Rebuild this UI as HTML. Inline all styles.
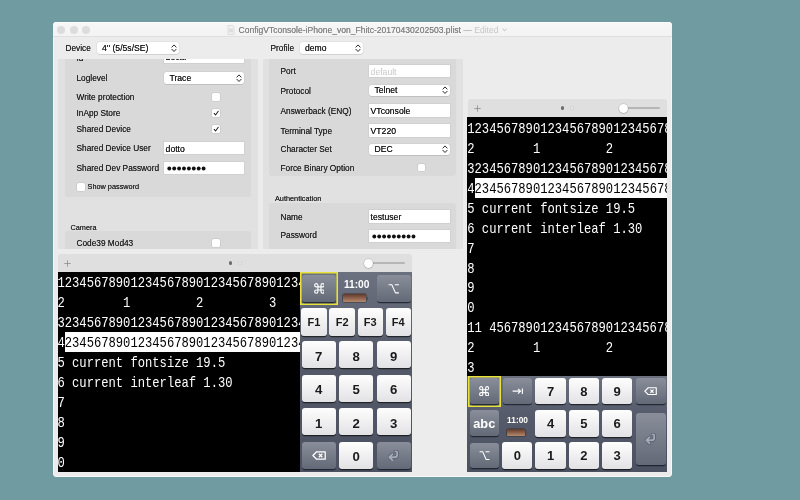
<!DOCTYPE html>
<html>
<head>
<meta charset="utf-8">
<style>
*{box-sizing:border-box;margin:0;padding:0}
html,body{width:800px;height:500px;overflow:hidden}
body{background:#6f9ba1;font-family:"Liberation Sans",sans-serif;position:relative;color:#222}
div,span,svg{position:absolute}
#win{left:53px;top:22.4px;width:619.3px;height:455px;background:#ececec;border-radius:4px;box-shadow:inset 0 0 0 0.8px rgba(255,255,255,.75)}
#tb{left:53px;top:22.4px;width:619.3px;height:13.6px;background:linear-gradient(#f7f7f7,#f3f3f3);border-radius:4px 4px 0 0;box-shadow:inset 0 0.8px 0 rgba(255,255,255,.9),0 1px 0 #e0e0e0}
.tl{top:25.7px;width:8px;height:8px;margin-left:-0.25px;border-radius:50%;background:#dcdcdc}
#title{top:24.8px;left:238.6px;font-size:8.55px;line-height:11px;color:#868686;text-shadow:0 0 0.3px #868686;white-space:nowrap}
#title span{position:static;color:#c6c6c6;text-shadow:none}
.lbl{font-size:8.3px;line-height:12px;white-space:nowrap;color:#262626;text-shadow:0 0 0.35px rgba(38,38,38,.9)}
.sm{font-size:7.3px;margin-top:0.5px}
.sel,.fld{background:#fff;font-size:8.65px;line-height:12px;white-space:nowrap;color:#1e1e1e;text-shadow:0 0 0.35px rgba(30,30,30,.95)}
.sel{border-radius:2.5px;box-shadow:0 0 0 0.5px rgba(0,0,0,.07),0 0.6px 0.6px rgba(0,0,0,.16)}
.fld{box-shadow:0 0 0 0.5px rgba(0,0,0,.08)}
.sv{background:#e1e1e1;overflow:hidden}
.box{background:#d9d9d9;border-radius:3px}
.cb{width:7.5px;height:7.5px;background:#fff;border-radius:1.5px;box-shadow:0 0 0 0.5px rgba(0,0,0,.1)}
.hdr{background:#dfdfdf;border-radius:3px 3px 0 0}
.term{background:#000;overflow:hidden}
.row{left:0;font-family:"Liberation Mono",monospace;font-size:12.17px;line-height:20px;height:20px;color:#fff;white-space:pre;transform-origin:0 50%;transform:scaleY(1.13)}
.row.inv{color:#000}
.hl{background:#fff}
.kb{background:linear-gradient(#6b717f,#555b6a 40%,#4b5160);overflow:hidden}
.k{border-radius:3px;text-align:center;font-weight:bold;color:#1a1a1a;background:linear-gradient(#fefefe,#e2e2e5);box-shadow:0 1.2px 0.5px rgba(0,0,0,.6)}
.k.d{background:linear-gradient(#898e9a,#646977);color:#fff;box-shadow:0 1.3px 0.5px rgba(20,24,36,.75)}
.k span{left:0;width:100%;text-align:center}
</style>
</head>
<body>
<div id="root" style="left:0;top:0;width:800px;height:500px;will-change:transform">
<div id="win"></div>
<div id="tb"></div>
<div class="tl" style="left:57.5px"></div>
<div class="tl" style="left:70px"></div>
<div class="tl" style="left:82.5px"></div>
<svg style="left:227.2px;top:24.8px" width="8" height="10" viewBox="0 0 8 10"><path d="M1 0.5h4.5l1.5 1.5v7.5h-6z" fill="#f2f2f2" stroke="#cfcfcf" stroke-width="0.6"/><rect x="2" y="3.5" width="4" height="4" fill="#dedede"/></svg>
<div id="title">ConfigVTconsole-iPhone_von_Fhitc-20170430202503.plist <span style="color:#a4a4a4">—</span> <span>Edited</span></div>
<svg style="left:501.5px;top:28px" width="5" height="4" viewBox="0 0 5 4"><path d="M0.6 0.8L2.5 2.7L4.4 0.8" fill="none" stroke="#b2b2b2" stroke-width="0.95"/></svg>

<div class="lbl " style="left:65.5px;top:42.4px">Device</div>
<div class="sel" style="left:97px;top:42px;width:82px;height:12px"><span style="left:5px;top:0.1px">4'' (5/5s/SE)</span><svg style="right:1.6px;top:1.7999999999999998px" width="6" height="8.4" viewBox="0 0 6 8.4"><path d="M0.9 3.1 L3 0.9 L5.1 3.1 M0.9 5.3 L3 7.5 L5.1 5.3" fill="none" stroke="#2a2a2a" stroke-width="1" stroke-linecap="round" stroke-linejoin="round"/></svg></div>
<div class="lbl " style="left:270.5px;top:42.4px">Profile</div>
<div class="sel" style="left:300px;top:42px;width:63px;height:12px"><span style="left:5px;top:0.1px">demo</span><svg style="right:1.6px;top:1.7999999999999998px" width="6" height="8.4" viewBox="0 0 6 8.4"><path d="M0.9 3.1 L3 0.9 L5.1 3.1 M0.9 5.3 L3 7.5 L5.1 5.3" fill="none" stroke="#2a2a2a" stroke-width="1" stroke-linecap="round" stroke-linejoin="round"/></svg></div>
<div class="sv" style="left:57.5px;top:59px;width:200px;height:190px">
<div class="box" style="left:7.5px;top:-10px;width:186px;height:147.6px"></div>
<div class="box" style="left:7.5px;top:172px;width:186px;height:40px"></div>
<div class="fld" style="left:106.5px;top:-9px;width:80px;height:12.5px"><span style="left:1.6px;top:1.4px">Local</span></div>
<div class="lbl" style="left:19px;top:-7.2px">Id</div>
</div>
<div class="lbl " style="left:76.5px;top:72.4px">Loglevel</div>
<div class="sel" style="left:164px;top:72px;width:80px;height:11.5px"><span style="left:5.5px;top:-0.15px">Trace</span><svg style="right:1.6px;top:1.5499999999999998px" width="6" height="8.4" viewBox="0 0 6 8.4"><path d="M0.9 3.1 L3 0.9 L5.1 3.1 M0.9 5.3 L3 7.5 L5.1 5.3" fill="none" stroke="#2a2a2a" stroke-width="1" stroke-linecap="round" stroke-linejoin="round"/></svg></div>
<div class="lbl " style="left:76.5px;top:90.9px">Write protection</div>
<div class="cb" style="left:212px;top:93px"></div>
<div class="lbl " style="left:76.5px;top:107.4px">InApp Store</div>
<div class="cb" style="left:212px;top:109px"><svg style="left:0.5px;top:0.5px" width="6.5" height="6.5" viewBox="0 0 7 7"><path d="M1.3 3.7L2.8 5.4L5.6 1.3" fill="none" stroke="#222" stroke-width="1.1" stroke-linecap="round" stroke-linejoin="round"/></svg></div>
<div class="lbl " style="left:76.5px;top:123.4px">Shared Device</div>
<div class="cb" style="left:212px;top:125px"><svg style="left:0.5px;top:0.5px" width="6.5" height="6.5" viewBox="0 0 7 7"><path d="M1.3 3.7L2.8 5.4L5.6 1.3" fill="none" stroke="#222" stroke-width="1.1" stroke-linecap="round" stroke-linejoin="round"/></svg></div>
<div class="lbl " style="left:76.5px;top:142.4px">Shared Device User</div>
<div class="fld" style="left:164px;top:141.5px;width:80px;height:12.5px"><span style="left:1.6px;top:1.15px">dotto</span></div>
<div class="lbl " style="left:76.5px;top:162.4px">Shared Dev Password</div>
<div class="fld" style="left:164px;top:161.5px;width:80px;height:12.5px"><span style="left:2.5px;top:1.15px"><svg style="left:0;top:3.5px" width="39.2" height="5" viewBox="0 0 39.2 5"><circle cx="2.3" cy="2.5" r="1.95" fill="#111"/><circle cx="7.2" cy="2.5" r="1.95" fill="#111"/><circle cx="12.100000000000001" cy="2.5" r="1.95" fill="#111"/><circle cx="17.0" cy="2.5" r="1.95" fill="#111"/><circle cx="21.900000000000002" cy="2.5" r="1.95" fill="#111"/><circle cx="26.8" cy="2.5" r="1.95" fill="#111"/><circle cx="31.700000000000003" cy="2.5" r="1.95" fill="#111"/><circle cx="36.6" cy="2.5" r="1.95" fill="#111"/></svg></span></div>
<div class="cb" style="left:77px;top:183.3px"></div>
<div class="lbl sm" style="left:87.6px;top:180.9px">Show password</div>
<div class="lbl sm" style="left:70.5px;top:221.4px">Camera</div>
<div class="lbl " style="left:76.5px;top:236.9px">Code39 Mod43</div>
<div class="cb" style="left:212px;top:239px"></div>
<div class="sv" style="left:262.5px;top:59px;width:200px;height:190px">
<div class="box" style="left:6.5px;top:-10px;width:187px;height:126.5px"></div>
<div class="box" style="left:6.5px;top:143.5px;width:187px;height:60px"></div>
</div>
<div class="lbl " style="left:280.5px;top:65.4px">Port</div>
<div class="fld" style="left:369px;top:64.5px;width:81px;height:12.5px"><span style="left:1.6px;top:1.15px;color:#cacaca;text-shadow:none">default</span></div>
<div class="lbl " style="left:280.5px;top:85.4px">Protocol</div>
<div class="sel" style="left:369px;top:84.5px;width:81px;height:11.5px"><span style="left:5.5px;top:-0.15px">Telnet</span><svg style="right:1.6px;top:1.5499999999999998px" width="6" height="8.4" viewBox="0 0 6 8.4"><path d="M0.9 3.1 L3 0.9 L5.1 3.1 M0.9 5.3 L3 7.5 L5.1 5.3" fill="none" stroke="#2a2a2a" stroke-width="1" stroke-linecap="round" stroke-linejoin="round"/></svg></div>
<div class="lbl " style="left:280.5px;top:104.9px">Answerback (ENQ)</div>
<div class="fld" style="left:369px;top:104px;width:81px;height:12.5px"><span style="left:1.6px;top:1.15px">VTconsole</span></div>
<div class="lbl " style="left:280.5px;top:124.9px">Terminal Type</div>
<div class="fld" style="left:369px;top:124px;width:81px;height:12.5px"><span style="left:1.6px;top:1.15px">VT220</span></div>
<div class="lbl " style="left:280.5px;top:143.4px">Character Set</div>
<div class="sel" style="left:369px;top:143.5px;width:81px;height:11.5px"><span style="left:5.5px;top:-0.15px">DEC</span><svg style="right:1.6px;top:1.5499999999999998px" width="6" height="8.4" viewBox="0 0 6 8.4"><path d="M0.9 3.1 L3 0.9 L5.1 3.1 M0.9 5.3 L3 7.5 L5.1 5.3" fill="none" stroke="#2a2a2a" stroke-width="1" stroke-linecap="round" stroke-linejoin="round"/></svg></div>
<div class="lbl " style="left:280.5px;top:161.5px">Force Binary Option</div>
<div class="cb" style="left:417.5px;top:163.5px"></div>
<div class="lbl sm" style="left:275px;top:192.4px">Authentication</div>
<div class="lbl " style="left:280.5px;top:210.9px">Name</div>
<div class="fld" style="left:369px;top:210px;width:81px;height:12.5px"><span style="left:1.6px;top:1.15px">testuser</span></div>
<div class="lbl " style="left:280.5px;top:229.4px">Password</div>
<div class="fld" style="left:369px;top:229.5px;width:81px;height:12.5px"><span style="left:2.5px;top:1.15px"><svg style="left:0;top:3.5px" width="44.1" height="5" viewBox="0 0 44.1 5"><circle cx="2.3" cy="2.5" r="1.95" fill="#111"/><circle cx="7.2" cy="2.5" r="1.95" fill="#111"/><circle cx="12.100000000000001" cy="2.5" r="1.95" fill="#111"/><circle cx="17.0" cy="2.5" r="1.95" fill="#111"/><circle cx="21.900000000000002" cy="2.5" r="1.95" fill="#111"/><circle cx="26.8" cy="2.5" r="1.95" fill="#111"/><circle cx="31.700000000000003" cy="2.5" r="1.95" fill="#111"/><circle cx="36.6" cy="2.5" r="1.95" fill="#111"/><circle cx="41.5" cy="2.5" r="1.95" fill="#111"/></svg></span></div>
<div class="hdr" style="left:58px;top:254px;width:354.3px;height:18.4px"></div>
<svg style="left:64.0px;top:259.7px" width="7" height="7" viewBox="0 0 7 7"><path d="M3.5 0.3V6.7M0.3 3.5H6.7" stroke="#8c8c8c" stroke-width="0.8"/></svg>
<div style="left:228.6px;top:261.3px;width:3.8px;height:3.8px;border-radius:50%;background:#6c6c6c"></div>
<div style="left:238.1px;top:261.4px;width:3.6px;height:3.6px;border-radius:50%;background:#e6e6e6;box-shadow:inset 0 0 0 0.6px #c8c8c8"></div>
<div style="left:368px;top:262.3px;width:37px;height:1.8px;background:#b6b6b6;border-radius:1px"></div>
<div style="left:363.5px;top:258.7px;width:9px;height:9px;border-radius:50%;background:#fff;box-shadow:0 0 0 0.5px rgba(0,0,0,.15),0 0.5px 1px rgba(0,0,0,.25)"></div>
<div class="term" style="left:57.5px;top:272.4px;width:242.5px;height:199.2px">
<div class="row" style="top:1.90px;left:-0.05px">1234567890123456789012345678901234567890</div>
<div class="row" style="top:21.86px;left:-0.05px">2        1         2         3</div>
<div class="row" style="top:41.82px;left:-0.05px">3234567890123456789012345678901234567890</div>
<div class="hl" style="left:7.5px;top:59.88px;width:242.5px;height:20px"></div>
<div class="row" style="top:61.78px;left:-0.05px">4</div>
<div class="row inv" style="top:61.78px;left:7.25px;clip-path:inset(0 0 0 0)">234567890123456789012345678901234567890</div>
<div class="row" style="top:81.74px;left:-0.05px">5 current fontsize 19.5</div>
<div class="row" style="top:101.70px;left:-0.05px">6 current interleaf 1.30</div>
<div class="row" style="top:121.66px;left:-0.05px">7</div>
<div class="row" style="top:141.62px;left:-0.05px">8</div>
<div class="row" style="top:161.58px;left:-0.05px">9</div>
<div class="row" style="top:181.54px;left:-0.05px">0</div>
</div>
<div class="hdr" style="left:467.6px;top:99.2px;width:199.2px;height:18px"></div>
<svg style="left:473.5px;top:104.7px" width="7" height="7" viewBox="0 0 7 7"><path d="M3.5 0.3V6.7M0.3 3.5H6.7" stroke="#8c8c8c" stroke-width="0.8"/></svg>
<div style="left:560.6px;top:106.3px;width:3.8px;height:3.8px;border-radius:50%;background:#6c6c6c"></div>
<div style="left:570.1px;top:106.4px;width:3.6px;height:3.6px;border-radius:50%;background:#e6e6e6;box-shadow:inset 0 0 0 0.6px #c8c8c8"></div>
<div style="left:623px;top:107.3px;width:37px;height:1.8px;background:#b6b6b6;border-radius:1px"></div>
<div style="left:618.5px;top:103.7px;width:9px;height:9px;border-radius:50%;background:#fff;box-shadow:0 0 0 0.5px rgba(0,0,0,.15),0 0.5px 1px rgba(0,0,0,.25)"></div>
<div class="term" style="left:467.3px;top:117px;width:199.5px;height:258.6px">
<div class="row" style="top:2.65px;left:-0.05px">1234567890123456789012345678901234567890</div>
<div class="row" style="top:22.63px;left:-0.05px">2        1         2         3</div>
<div class="row" style="top:42.61px;left:-0.05px">3234567890123456789012345678901234567890</div>
<div class="hl" style="left:7.5px;top:60.69px;width:199.5px;height:20px"></div>
<div class="row" style="top:62.59px;left:-0.05px">4</div>
<div class="row inv" style="top:62.59px;left:7.25px;clip-path:inset(0 0 0 0)">234567890123456789012345678901234567890</div>
<div class="row" style="top:82.57px;left:-0.05px">5 current fontsize 19.5</div>
<div class="row" style="top:102.55px;left:-0.05px">6 current interleaf 1.30</div>
<div class="row" style="top:122.53px;left:-0.05px">7</div>
<div class="row" style="top:142.51px;left:-0.05px">8</div>
<div class="row" style="top:162.49px;left:-0.05px">9</div>
<div class="row" style="top:182.47px;left:-0.05px">0</div>
<div class="row" style="top:202.45px;left:-0.05px">11 4567890123456789012345678901234567890</div>
<div class="row" style="top:222.43px;left:-0.05px">2        1         2         3</div>
<div class="row" style="top:242.41px;left:-0.05px">3</div>
</div>
<div class="kb" style="left:300px;top:272px;width:112.3px;height:199.6px"></div>
<div style="left:300px;top:272px;width:38px;height:33.4px;box-shadow:inset 0 0 0 1.6px #e8e23a"></div>
<div class="k d" style="left:302.3px;top:274.7px;width:33.5px;height:27px"><svg style="left:11.3px;top:8.350000000000001px" width="10.9" height="10.9" viewBox="0 0 10 10"><path d="M3.6 2.1A1.5 1.5 0 1 0 2.1 3.6H7.9A1.5 1.5 0 1 0 6.4 2.1V7.9A1.5 1.5 0 1 0 7.9 6.4H2.1A1.5 1.5 0 1 0 3.6 7.9Z" fill="none" stroke="#fff" stroke-width="1.05" stroke-linejoin="round"/></svg></div>
<div style="left:338.2px;top:278.8px;width:37px;text-align:center;font-weight:bold;font-size:10.2px;line-height:11px;color:#fff">11:00</div>
<div style="left:343.3px;top:293.8px;width:23px;height:8.4px;border-radius:1px;background:linear-gradient(#5c3a2e,#8a5b47 45%,#b48a70);box-shadow:0 0 0 0.6px rgba(45,35,35,.75)"></div>
<div style="left:366.3px;top:296.5px;width:2px;height:3px;background:#4a4a52;border-radius:0 1px 1px 0"></div>
<div class="k d" style="left:377px;top:274.7px;width:33.8px;height:27px"><svg style="left:11.149999999999999px;top:7.95px" width="11.5" height="11.5" viewBox="0 0 10 10"><path d="M0.5 1.5H3.3L6.5 8.6H9.5M5.9 1.5H9.5" fill="none" stroke="#fff" stroke-width="0.95" stroke-linejoin="round"/></svg></div>
<div class="k" style="left:301.3px;top:308.3px;width:25.4px;height:27.4px"><span style="top:7.375px;font-size:11px;line-height:12.649999999999999px">F1</span></div>
<div class="k" style="left:329.4px;top:308.3px;width:25.4px;height:27.4px"><span style="top:7.375px;font-size:11px;line-height:12.649999999999999px">F2</span></div>
<div class="k" style="left:357.5px;top:308.3px;width:25.4px;height:27.4px"><span style="top:7.375px;font-size:11px;line-height:12.649999999999999px">F3</span></div>
<div class="k" style="left:385.6px;top:308.3px;width:25.4px;height:27.4px"><span style="top:7.375px;font-size:11px;line-height:12.649999999999999px">F4</span></div>
<div class="k" style="left:301.5px;top:341.3px;width:34.2px;height:27.2px"><span style="top:7.510000000000001px;font-size:13.2px;line-height:15.179999999999998px">7</span></div>
<div class="k" style="left:339.1px;top:341.3px;width:34.2px;height:27.2px"><span style="top:7.510000000000001px;font-size:13.2px;line-height:15.179999999999998px">8</span></div>
<div class="k" style="left:376.6px;top:341.3px;width:34.2px;height:27.2px"><span style="top:7.510000000000001px;font-size:13.2px;line-height:15.179999999999998px">9</span></div>
<div class="k" style="left:301.5px;top:374.7px;width:34.2px;height:27.2px"><span style="top:7.510000000000001px;font-size:13.2px;line-height:15.179999999999998px">4</span></div>
<div class="k" style="left:339.1px;top:374.7px;width:34.2px;height:27.2px"><span style="top:7.510000000000001px;font-size:13.2px;line-height:15.179999999999998px">5</span></div>
<div class="k" style="left:376.6px;top:374.7px;width:34.2px;height:27.2px"><span style="top:7.510000000000001px;font-size:13.2px;line-height:15.179999999999998px">6</span></div>
<div class="k" style="left:301.5px;top:408.2px;width:34.2px;height:27.2px"><span style="top:7.510000000000001px;font-size:13.2px;line-height:15.179999999999998px">1</span></div>
<div class="k" style="left:339.1px;top:408.2px;width:34.2px;height:27.2px"><span style="top:7.510000000000001px;font-size:13.2px;line-height:15.179999999999998px">2</span></div>
<div class="k" style="left:376.6px;top:408.2px;width:34.2px;height:27.2px"><span style="top:7.510000000000001px;font-size:13.2px;line-height:15.179999999999998px">3</span></div>
<div class="k d" style="left:301.5px;top:441.6px;width:34.2px;height:27.2px"><svg style="left:10.100000000000001px;top:9.1px" width="14" height="9" viewBox="0 0 14 9"><path d="M4.6 0.8H13.2V8.2H4.6L0.9 4.5Z" fill="none" stroke="#fff" stroke-width="1.25" stroke-linejoin="round"/><path d="M6.9 2.8L10.3 6.2M10.3 2.8L6.9 6.2" stroke="#fff" stroke-width="1.25"/></svg></div>
<div class="k" style="left:339.1px;top:441.6px;width:34.2px;height:27.2px"><span style="top:7.510000000000001px;font-size:13.2px;line-height:15.179999999999998px">0</span></div>
<div class="k d" style="left:376.6px;top:441.6px;width:34.2px;height:27.2px"><svg style="left:11.3px;top:8.0px" width="11.6" height="11.6" viewBox="0 0 11 11"><path d="M7 1.3Q8.7 1.1 8.7 2.9V4.4Q8.7 6.9 6.2 6.9H1.9M4.3 3.9L1.3 6.9L4.3 9.9" fill="none" stroke="#535a69" stroke-width="3.1" stroke-linejoin="round" stroke-linecap="round"/><path d="M7 1.3Q8.7 1.1 8.7 2.9V4.4Q8.7 6.9 6.2 6.9H1.9M4.3 3.9L1.3 6.9L4.3 9.9" fill="none" stroke="#a4aab6" stroke-width="1.75" stroke-linejoin="round" stroke-linecap="round"/></svg></div>
<div class="kb" style="left:467.3px;top:375.5px;width:199.5px;height:96.2px"></div>
<div style="left:467.6px;top:375.8px;width:33.2px;height:31px;box-shadow:inset 0 0 0 1.6px #e8e23a"></div>
<div class="k d" style="left:469.7px;top:378.2px;width:29.2px;height:25.6px"><svg style="left:9.399999999999999px;top:7.9px" width="10.4" height="10.4" viewBox="0 0 10 10"><path d="M3.6 2.1A1.5 1.5 0 1 0 2.1 3.6H7.9A1.5 1.5 0 1 0 6.4 2.1V7.9A1.5 1.5 0 1 0 7.9 6.4H2.1A1.5 1.5 0 1 0 3.6 7.9Z" fill="none" stroke="#fff" stroke-width="1.05" stroke-linejoin="round"/></svg></div>
<div class="k d" style="left:503.2px;top:378.2px;width:29.2px;height:25.6px"><svg style="left:9.0px;top:9.8px" width="11.2" height="6.4" viewBox="0 0 11.2 6.4"><path d="M0.6 3.2H8.6M6 0.8L8.6 3.2L6 5.6M10.4 0.4V6" fill="none" stroke="#fff" stroke-width="1.15" stroke-linejoin="round"/></svg></div>
<div class="k" style="left:535.3px;top:377.8px;width:30.4px;height:26.6px"><span style="top:6.725000000000001px;font-size:13px;line-height:14.95px">7</span></div>
<div class="k" style="left:568.7px;top:377.8px;width:30.4px;height:26.6px"><span style="top:6.725000000000001px;font-size:13px;line-height:14.95px">8</span></div>
<div class="k" style="left:602px;top:377.8px;width:30.4px;height:26.6px"><span style="top:6.725000000000001px;font-size:13px;line-height:14.95px">9</span></div>
<div class="k d" style="left:635.8px;top:378.2px;width:30px;height:25.6px"><svg style="left:8.5px;top:8.600000000000001px" width="13" height="8.4" viewBox="0 0 14 9"><path d="M4.6 0.8H13.2V8.2H4.6L0.9 4.5Z" fill="none" stroke="#fff" stroke-width="1.25" stroke-linejoin="round"/><path d="M6.9 2.8L10.3 6.2M10.3 2.8L6.9 6.2" stroke="#fff" stroke-width="1.25"/></svg></div>
<div class="k d" style="left:469.7px;top:410.2px;width:29.2px;height:25.8px"><span style="top:7.140000000000001px;font-size:12.8px;line-height:14.719999999999999px">abc</span></div>
<div style="left:499px;top:414.5px;width:37px;text-align:center;font-weight:bold;font-size:8.3px;line-height:10px;color:#fff">11:00</div>
<div style="left:507.2px;top:428.8px;width:18px;height:7px;border-radius:1px;background:linear-gradient(#5c3a2e,#8a5b47 45%,#b48a70);box-shadow:0 0 0 0.6px rgba(45,35,35,.75)"></div>
<div style="left:525.2px;top:430.8px;width:2px;height:3px;background:#4a4a52;border-radius:0 1px 1px 0"></div>
<div class="k" style="left:535.3px;top:410.2px;width:30.4px;height:26.4px"><span style="top:6.625px;font-size:13px;line-height:14.95px">4</span></div>
<div class="k" style="left:568.7px;top:410.2px;width:30.4px;height:26.4px"><span style="top:6.625px;font-size:13px;line-height:14.95px">5</span></div>
<div class="k" style="left:602px;top:410.2px;width:30.4px;height:26.4px"><span style="top:6.625px;font-size:13px;line-height:14.95px">6</span></div>
<div class="k d" style="left:636.2px;top:413.2px;width:29.6px;height:51.6px"><svg style="left:9.0px;top:20.3px" width="11.6" height="11.6" viewBox="0 0 11 11"><path d="M7 1.3Q8.7 1.1 8.7 2.9V4.4Q8.7 6.9 6.2 6.9H1.9M4.3 3.9L1.3 6.9L4.3 9.9" fill="none" stroke="#535a69" stroke-width="3.1" stroke-linejoin="round" stroke-linecap="round"/><path d="M7 1.3Q8.7 1.1 8.7 2.9V4.4Q8.7 6.9 6.2 6.9H1.9M4.3 3.9L1.3 6.9L4.3 9.9" fill="none" stroke="#a4aab6" stroke-width="1.75" stroke-linejoin="round" stroke-linecap="round"/></svg></div>
<div class="k d" style="left:469.7px;top:442.5px;width:29.2px;height:25.8px"><svg style="left:9.1px;top:7.6000000000000005px" width="11" height="11" viewBox="0 0 10 10"><path d="M0.5 1.5H3.3L6.5 8.6H9.5M5.9 1.5H9.5" fill="none" stroke="#fff" stroke-width="0.95" stroke-linejoin="round"/></svg></div>
<div class="k" style="left:502.2px;top:442.3px;width:30.2px;height:26.4px"><span style="top:6.625px;font-size:13px;line-height:14.95px">0</span></div>
<div class="k" style="left:535.3px;top:442.3px;width:30.4px;height:26.4px"><span style="top:6.625px;font-size:13px;line-height:14.95px">1</span></div>
<div class="k" style="left:568.7px;top:442.3px;width:30.4px;height:26.4px"><span style="top:6.625px;font-size:13px;line-height:14.95px">2</span></div>
<div class="k" style="left:602px;top:442.3px;width:30.4px;height:26.4px"><span style="top:6.625px;font-size:13px;line-height:14.95px">3</span></div>
</div></body></html>
